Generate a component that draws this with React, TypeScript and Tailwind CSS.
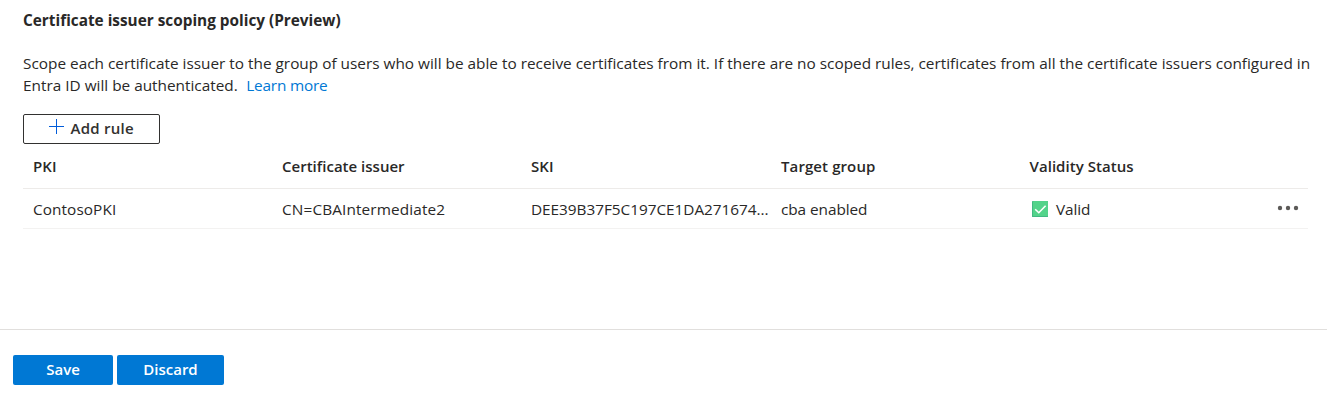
const columns = [
  { label: "PKI", tracking: "tracking-[0.1px]" },
  { label: "Certificate issuer", tracking: "tracking-[0.01px]" },
  { label: "SKI", tracking: "tracking-[0.1px]" },
  { label: "Target group", tracking: "tracking-[0.1px]" },
  { label: "Validity Status", tracking: "tracking-[0.05px] ml-[-0.5px]" },
];

const gridColumns = "grid grid-cols-[249px_249px_250px_249px_1fr] pl-[10px]";

function PlusIcon() {
  return (
    <svg width="15" height="15" viewBox="0 0 15 15" className="mt-[-5px]" aria-hidden="true">
      <path d="M7.5 0v15M0 7.5h15" stroke="#015cda" strokeWidth="1" fill="none" />
    </svg>
  );
}

function ValidIcon() {
  return (
    <svg width="16" height="16" viewBox="0 0 16 16" className="shrink-0" aria-hidden="true">
      <rect width="16" height="16" rx="0.6" fill="#42b883" />
      <rect x="1" width="15" height="15" rx="0.4" fill="#53d38a" />
      <path d="M3.2 8.2l3.6 3.5 6.8-7" stroke="#fff" strokeWidth="1.6" fill="none" />
    </svg>
  );
}

function MoreIcon() {
  return (
    <svg width="22" height="6" viewBox="0 0 22 6" fill="#5c5a58" aria-hidden="true">
      <circle cx="3" cy="3" r="2.2" />
      <circle cx="11" cy="3" r="2.2" />
      <circle cx="19" cy="3" r="2.2" />
    </svg>
  );
}

export default function App() {
  return (
    <div className="flex h-[401px] w-[1327px] flex-col overflow-hidden bg-white font-['Open_Sans','Noto_Sans',sans-serif] text-[15px] leading-[22px] text-[#292827]">
      <main className="h-[329px] pl-[23px] pt-[9px]">
        <h1 className="text-[15.35px] font-bold leading-[22px]">Certificate issuer scoping policy (Preview)</h1>
        <p className="mt-[21px] whitespace-nowrap text-[15.35px] leading-[22px] tracking-[0.004px]">
          Scope each certificate issuer to the group of users who will be able to receive certificates from it. If there are no scoped rules, certificates from all the certificate issuers configured in
          <br />
          Entra ID will be authenticated.
          <a href="#" className="ml-[8.5px] tracking-[-0.19px] text-[#0078d4]">Learn more</a>
        </p>
        <button className="mt-[18px] flex h-[30px] w-[137px] items-center rounded-[2px] border border-[#323130] pl-[25px] font-semibold tracking-[0.25px] text-[#323130]">
          <PlusIcon />
          <span className="-mt-[2px] ml-[6.5px]">Add rule</span>
        </button>
        <div className="w-[1285px]">
          <div className={`${gridColumns} h-[45px] border-b border-[#edebe9] pt-[11px] font-semibold`}>
            {columns.map((c) => (
              <span key={c.label} className={c.tracking}>{c.label}</span>
            ))}
          </div>
          <div className={`${gridColumns} h-[40px] border-b border-[#f3f2f1] pt-[9px] text-[15.35px] leading-[22px]`}>
            <span className="tracking-[0.08px]">ContosoPKI</span>
            <span className="tracking-[0.13px]">CN=CBAIntermediate2</span>
            <span className="tracking-[-0.03px]">DEE39B37F5C197CE1DA271674...</span>
            <span className="tracking-[-0.06px]">cba enabled</span>
            <div className="flex items-start justify-between pr-[9px]">
              <div className="flex items-center pl-[2px]">
                <ValidIcon />
                <span className="ml-[8px] tracking-[-0.1px]">Valid</span>
              </div>
              <button className="flex h-[19px] items-center" aria-label="More actions">
                <MoreIcon />
              </button>
            </div>
          </div>
        </div>
      </main>
      <footer className="flex h-[72px] items-start gap-[4px] border-t border-[#e1dfdd] pl-[13px] pt-[25px] font-semibold text-white">
        <button className="h-[30px] w-[100px] rounded-[2px] bg-[#0078d4] pb-[2px]">Save</button>
        <button className="h-[30px] w-[107px] rounded-[2px] bg-[#0078d4] pb-[2px]">Discard</button>
      </footer>
    </div>
  );
}
